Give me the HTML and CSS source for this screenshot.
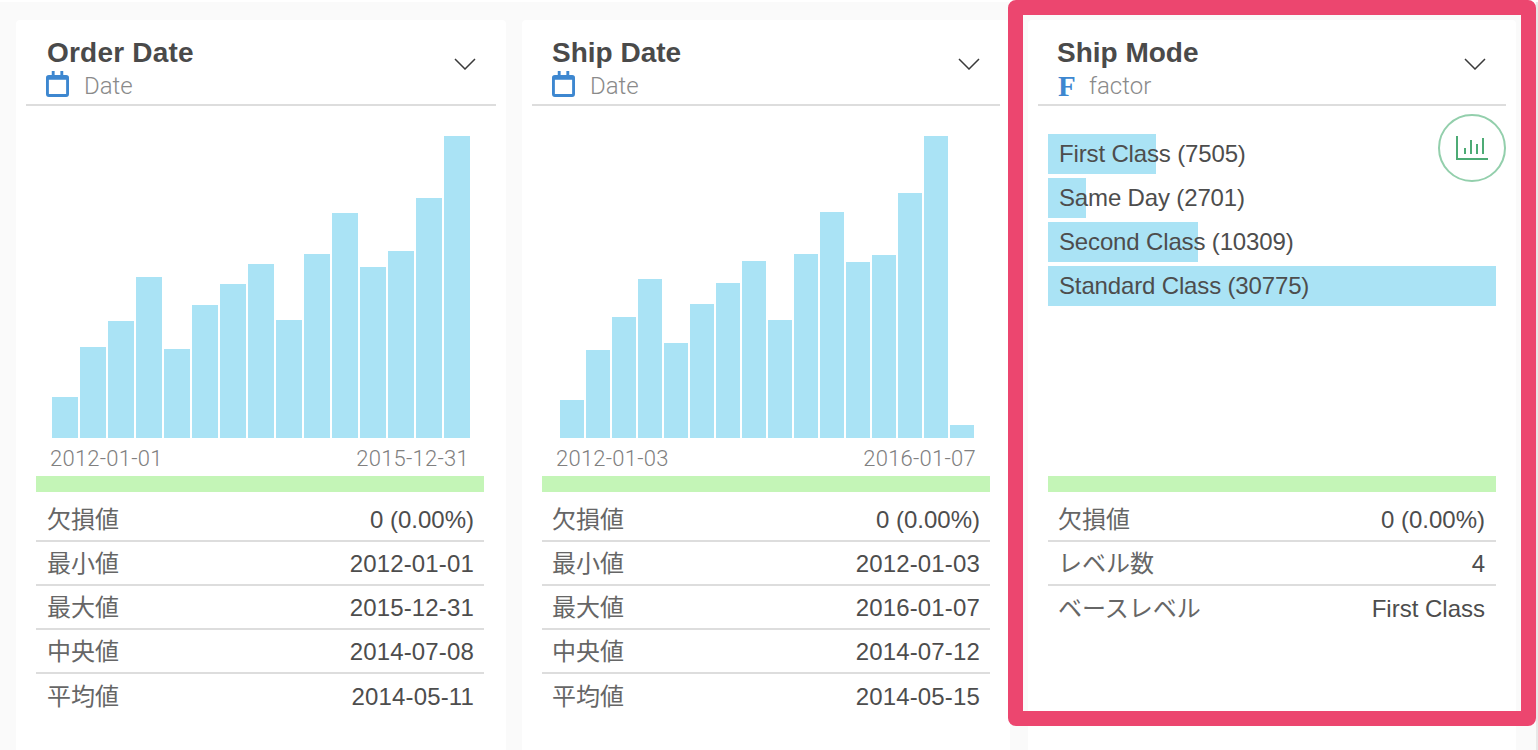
FILE: index.html
```html
<!DOCTYPE html>
<html lang="ja">
<head>
<meta charset="utf-8">
<title>Column summary</title>
<link rel="stylesheet" href="styles.css">
</head>
<body>
<main class="board">
  <section class="card card-first">
    <header class="head">
      <div>
        <h2 class="title">Order Date</h2>
        <div class="type"><svg class="cal" viewBox="0 0 24 27"><path class="cal-fill" d="M3 4h3V0h3v4h6V0h3v4h3a3 3 0 0 1 3 3v17a3 3 0 0 1-3 3H3a3 3 0 0 1-3-3V7a3 3 0 0 1 3-3zM3 9v15h18V9z"/></svg><span class="type-name">Date</span></div>
      </div>
      <svg class="chev" viewBox="0 0 22 12"><path d="M1 1l10 10L21 1"/></svg>
    </header>
    <div class="body">
      <div class="plot">
        <div class="bars bars-15">
          <i style="height:41px"></i><i style="height:91px"></i><i style="height:117px"></i><i style="height:161px"></i><i style="height:89px"></i><i style="height:133px"></i><i style="height:154px"></i><i style="height:174px"></i><i style="height:118px"></i><i style="height:184px"></i><i style="height:225px"></i><i style="height:171px"></i><i style="height:187px"></i><i style="height:240px"></i><i style="height:302px"></i>
        </div>
        <div class="axis axis-first"><span>2012-01-01</span><span>2015-12-31</span></div>
      </div>
      <div class="valid"></div>
      <dl class="stats">
        <div class="stat"><dt>欠損値</dt><dd>0 (0.00%)</dd></div>
        <div class="stat"><dt>最小値</dt><dd class="date">2012-01-01</dd></div>
        <div class="stat"><dt>最大値</dt><dd class="date">2015-12-31</dd></div>
        <div class="stat"><dt>中央値</dt><dd class="date">2014-07-08</dd></div>
        <div class="stat"><dt>平均値</dt><dd class="date">2014-05-11</dd></div>
      </dl>
    </div>
  </section>

  <section class="card">
    <header class="head">
      <div>
        <h2 class="title">Ship Date</h2>
        <div class="type"><svg class="cal" viewBox="0 0 24 27"><path class="cal-fill" d="M3 4h3V0h3v4h6V0h3v4h3a3 3 0 0 1 3 3v17a3 3 0 0 1-3 3H3a3 3 0 0 1-3-3V7a3 3 0 0 1 3-3zM3 9v15h18V9z"/></svg><span class="type-name">Date</span></div>
      </div>
      <svg class="chev" viewBox="0 0 22 12"><path d="M1 1l10 10L21 1"/></svg>
    </header>
    <div class="body">
      <div class="plot">
        <div class="bars bars-16">
          <i style="height:38px"></i><i style="height:88px"></i><i style="height:121px"></i><i style="height:159px"></i><i style="height:95px"></i><i style="height:134px"></i><i style="height:155px"></i><i style="height:177px"></i><i style="height:118px"></i><i style="height:184px"></i><i style="height:226px"></i><i style="height:176px"></i><i style="height:183px"></i><i style="height:245px"></i><i style="height:302px"></i><i style="height:13px"></i>
        </div>
        <div class="axis"><span>2012-01-03</span><span>2016-01-07</span></div>
      </div>
      <div class="valid"></div>
      <dl class="stats stats-second">
        <div class="stat"><dt>欠損値</dt><dd>0 (0.00%)</dd></div>
        <div class="stat"><dt>最小値</dt><dd class="date">2012-01-03</dd></div>
        <div class="stat"><dt>最大値</dt><dd class="date">2016-01-07</dd></div>
        <div class="stat"><dt>中央値</dt><dd class="date">2014-07-12</dd></div>
        <div class="stat"><dt>平均値</dt><dd class="date">2014-05-15</dd></div>
      </dl>
    </div>
  </section>

  <section class="card card-last">
    <header class="head">
      <div>
        <h2 class="title">Ship Mode</h2>
        <div class="type"><span class="factor-f">F</span><span class="type-name">factor</span></div>
      </div>
      <svg class="chev" viewBox="0 0 22 12"><path d="M1 1l10 10L21 1"/></svg>
    </header>
    <div class="body">
      <div class="plot plot-levels">
        <div class="level"><i style="width:108px"></i><span>First Class (7505)</span></div>
        <div class="level"><i style="width:38px"></i><span>Same Day (2701)</span></div>
        <div class="level"><i style="width:150px"></i><span>Second Class (10309)</span></div>
        <div class="level"><i style="width:448px"></i><span>Standard Class (30775)</span></div>
      </div>
      <div class="valid"></div>
      <dl class="stats stats-last">
        <div class="stat"><dt>欠損値</dt><dd>0 (0.00%)</dd></div>
        <div class="stat"><dt>レベル数</dt><dd>4</dd></div>
        <div class="stat"><dt>ベースレベル</dt><dd>First Class</dd></div>
      </dl>
    </div>
    <button class="chart-btn" type="button" aria-label="chart">
      <svg viewBox="0 0 32 24" width="32" height="24"><path d="M0 0h2v22h30v2H0z"/><path d="M8 12h2v6H8zM14 4h2v14h-2zM20 8h2v10h-2zM26 2h2v16h-2z"/></svg>
    </button>
  </section>
</main>
<div class="highlight"></div>
</body>
</html>
```
FILE: styles.css
```css
* { box-sizing: border-box; }
html, body { margin: 0; height: 100%; overflow: hidden; background: #fff; }
body { font-family: "Liberation Sans", "Noto Sans CJK JP", sans-serif; color: #4d4d4d; position: relative; }

.board {
  margin-top: 2px;
  height: 748px;
  width: 1538px;
  background: #fafafa;
  border-right: 2px solid #e8e8e8;
  display: flex;
  padding: 18px 0 0 16px;
  gap: 16px;
  overflow: hidden;
}

.card {
  position: relative;
  flex: none;
  width: 488px;
  height: 760px;
  background: #fff;
  border-radius: 4px;
  padding: 0 10px;
}
.card-first { width: 490px; }
.card-last { margin-left: 2px; }

.head {
  height: 86px;
  padding: 16px 11px 0 20px;
  border-bottom: 2px solid #ddd;
  display: flex;
  justify-content: space-between;
  align-items: flex-start;
}
.title {
  margin: 0;
  font-size: 28px;
  line-height: 34px;
  font-weight: 700;
  color: #4a4a4a;
  white-space: nowrap;
}
.card-first .title { margin-left: 1px; letter-spacing: .2px; }
.card-last .title { margin-left: -1px; }
.type {
  display: flex;
  align-items: center;
  height: 30px;
  margin-top: 1px;
}
.cal { width: 23px; height: 26px; flex: none; margin-bottom: 4px; }
.cal-fill { fill: #3d87d0; fill-rule: evenodd; }
.factor-f {
  font-family: "Liberation Serif", serif;
  font-weight: 700;
  font-size: 29px;
  line-height: 30px;
  color: #3d87d0;
  width: 16px;
}
.type-name {
  font-family: Roboto, "Liberation Sans", sans-serif;
  font-weight: 300;
  font-size: 24px;
  color: #8a8a8a;
  margin-left: 15px;
}
.chev { width: 22px; height: 12px; flex: none; margin: 22px 9px 0 0; }
.chev path { fill: none; stroke: #3a3a3a; stroke-width: 1.5; }

.body { width: 448px; margin-left: 10px; }
.plot { height: 370px; padding-top: 30px; }

.bars {
  display: flex;
  align-items: flex-end;
  height: 302px;
}
.bars i { display: block; flex: none; background: #aae3f5; }
.bars-15 { padding-left: 16px; gap: 2px; }
.bars-15 i { width: 26px; }
.bars-16 { padding-left: 18px; gap: 2px; }
.bars-16 i { width: 24px; }

.axis {
  display: flex;
  justify-content: space-between;
  align-items: center;
  height: 38px;
  padding: 2px 14px 0 14px;
  font-family: Roboto, "Liberation Sans", sans-serif;
  font-weight: 300;
  font-size: 22px;
  letter-spacing: .25px;
  color: #808080;
}
.axis-first { padding-right: 15px; }

.plot-levels { padding-top: 28px; display: flex; flex-direction: column; gap: 4px; }
.level {
  position: relative;
  height: 40px;
  display: flex;
  align-items: center;
  padding-left: 11px;
  font-size: 24px;
  letter-spacing: -.15px;
  color: #4d4d4d;
}
.level i { position: absolute; left: 0; top: 0; bottom: 0; background: #aae3f5; }
.level span { position: relative; white-space: nowrap; }

.valid { height: 16px; background: #c4f5b7; }

.stats { margin: 6px 0 0; }
.stat {
  display: flex;
  justify-content: space-between;
  align-items: center;
  height: 44px;
  padding: 0 10px 0 11px;
  border-bottom: 2px solid #ddd;
  font-size: 24px;
}
.stat:last-child { border-bottom: 0; }
.stat dt { color: #666; font-size: 24px; padding-bottom: 4px; }
.stat dd { margin: 0; padding-top: 2px; color: #4d4d4d; }
.stat dd.date { letter-spacing: .15px; }
.stats-second .stat { padding-left: 10px; }
.stats-last .stat { padding: 0 11px 0 10px; }

.chart-btn {
  position: absolute;
  left: 410px;
  top: 94px;
  width: 68px;
  height: 68px;
  padding: 0;
  border: 2px solid #93cfac;
  border-radius: 50%;
  background: #fff;
  display: flex;
  align-items: center;
  justify-content: center;
}
.chart-btn svg { fill: #4dab75; display: block; }

.highlight {
  position: absolute;
  left: 1008px;
  top: 0;
  width: 528px;
  height: 726px;
  border: 15px solid #ec466f;
  border-radius: 8px;
  pointer-events: none;
}
```
